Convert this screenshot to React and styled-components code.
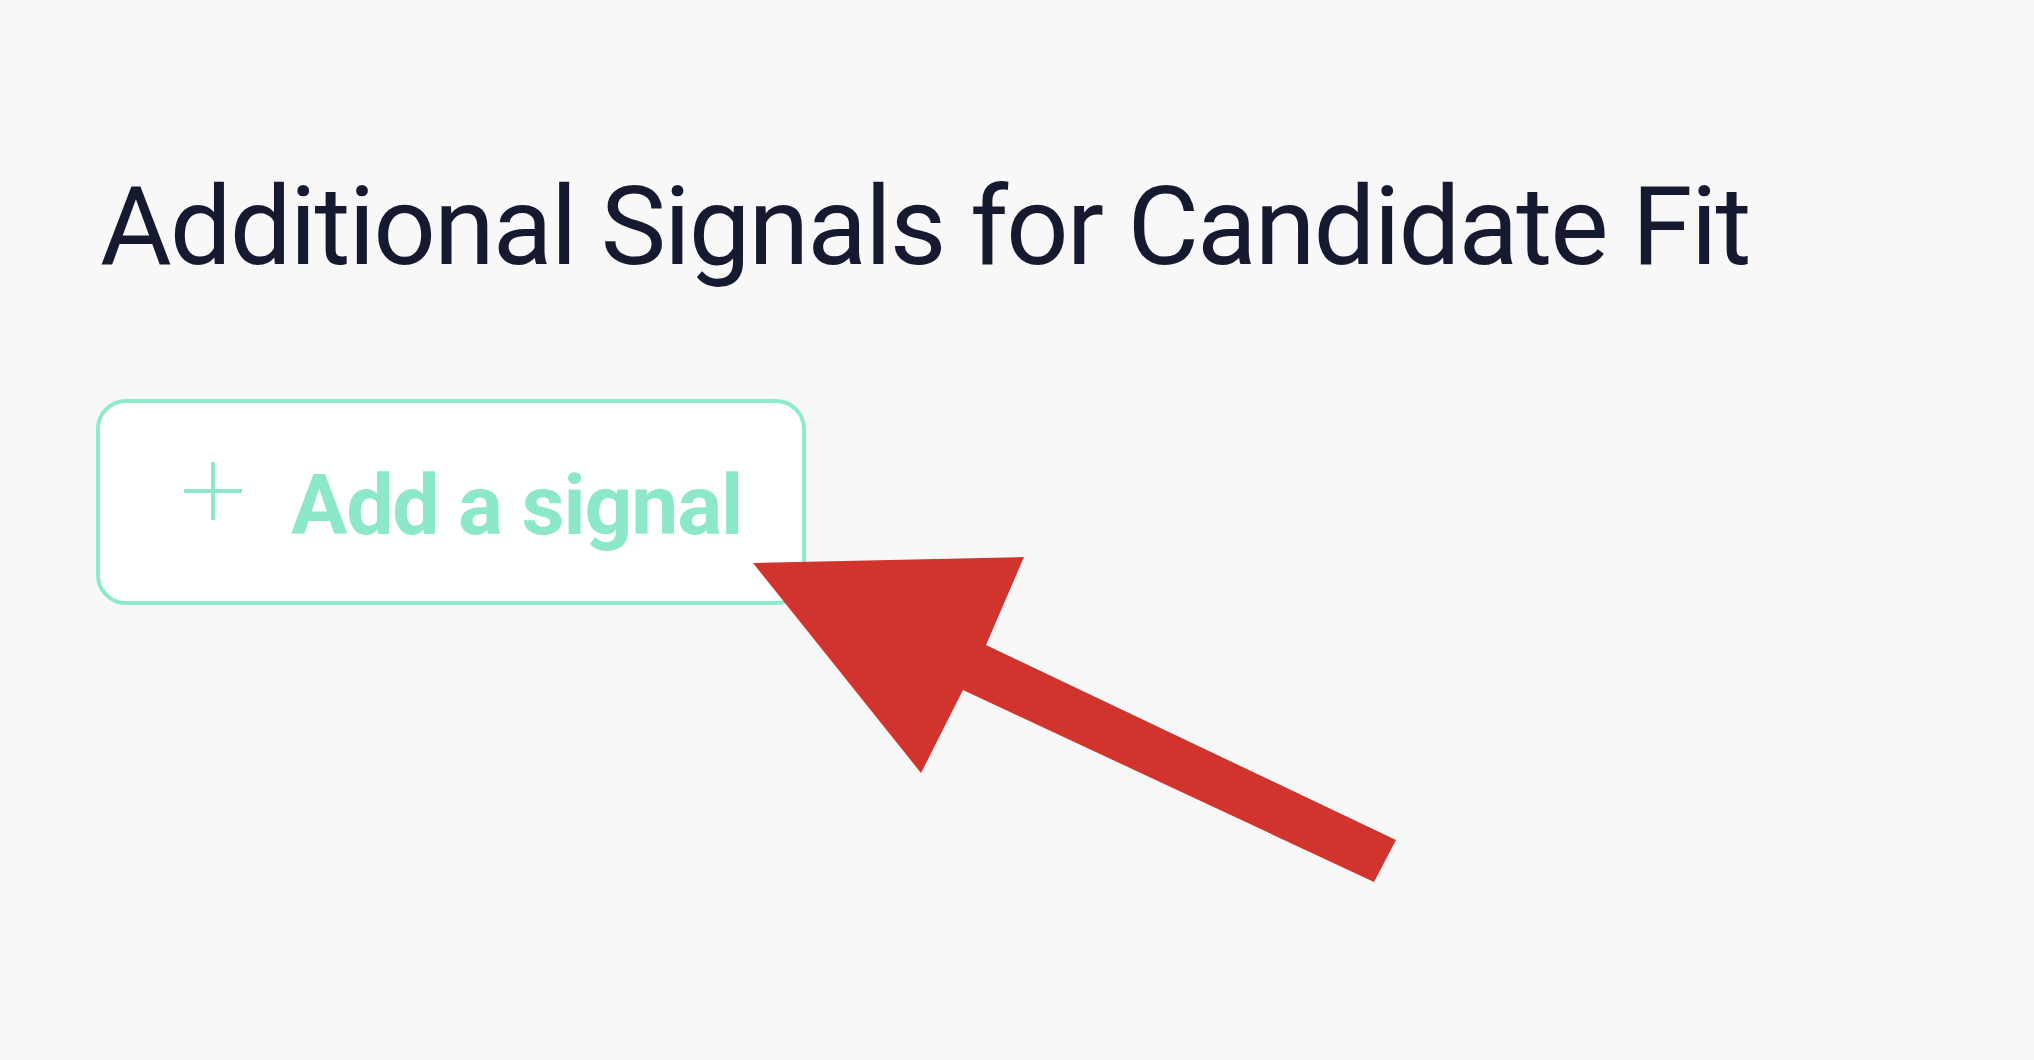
import React from "react";
import styled, { createGlobalStyle } from "styled-components";

const GlobalStyle = createGlobalStyle`
  html, body {
    margin: 0;
    padding: 0;
    background: #f8f8f8;
  }
  body {
    font-family: Roboto, "Liberation Sans", sans-serif;
  }
`;

const Page = styled.div`
  position: relative;
  width: 2034px;
  height: 1060px;
  overflow: hidden;
  padding: 172px 0 0 100px;
  box-sizing: border-box;
`;

const Title = styled.h2`
  margin: 0;
  font-size: 110px;
  line-height: 1;
  font-weight: 400;
  letter-spacing: -2px;
  color: #151a30;
  white-space: nowrap;
`;

const AddButton = styled.button`
  margin: 117px 0 0 -4px;
  height: 206px;
  box-sizing: border-box;
  display: inline-flex;
  align-items: center;
  gap: 47px;
  padding: 0 60px 0 82px;
  background: #ffffff;
  border: 4px solid #8eeacc;
  border-radius: 30px;
  cursor: pointer;
  font-family: Roboto, "Liberation Sans", sans-serif;
`;

const PlusIcon = styled.svg`
  width: 62px;
  height: 62px;
  margin-bottom: 22px;
  flex-shrink: 0;
`;

const ButtonLabel = styled.span`
  font-size: 84px;
  line-height: 1;
  font-weight: 700;
  letter-spacing: -1.2px;
  color: #8de8c9;
  padding-top: 8px;
`;

const Annotation = styled.svg`
  position: absolute;
  top: 0;
  left: 0;
  pointer-events: none;
`;

export default function App() {
  return (
    <>
      <GlobalStyle />
      <Page>
        <Title>Additional Signals for Candidate Fit</Title>
        <AddButton>
          <PlusIcon viewBox="0 0 62 62">
            <path d="M31 2v58M2 31h58" stroke="#8de8c9" strokeWidth="4" fill="none" />
          </PlusIcon>
          <ButtonLabel>Add a signal</ButtonLabel>
        </AddButton>
        <Annotation width="2034" height="1060" viewBox="0 0 2034 1060">
          <polygon
            points="753,563 1024,557 986,645 1396,840 1374,882 963,690 921,773"
            fill="#d0342c"
          />
        </Annotation>
      </Page>
    </>
  );
}
